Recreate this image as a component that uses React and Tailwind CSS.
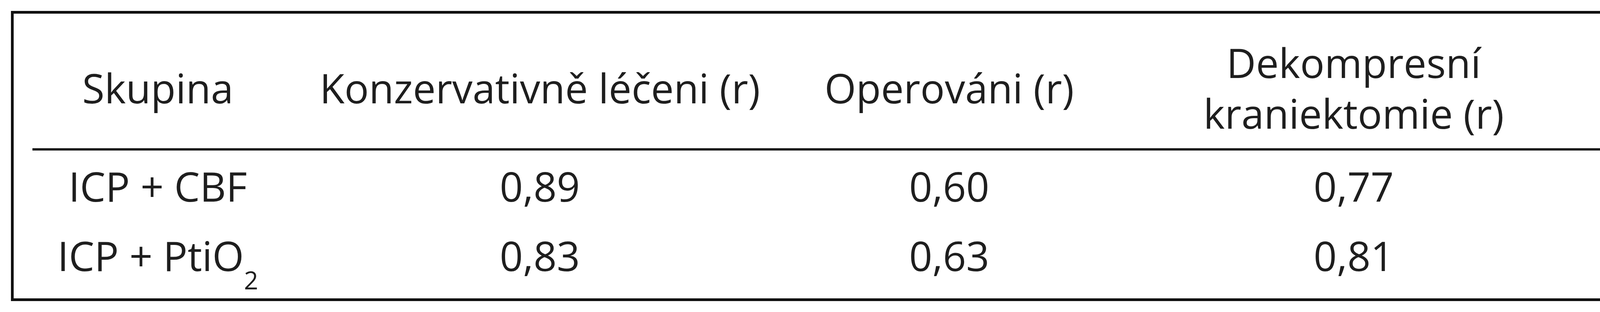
export default function App() {
  const font = { fontFamily: '"Open Sans", "Noto Sans", sans-serif' };
  const rows = [
    { g: <>ICP + CBF</>, a: "0,89", b: "0,60", c: "0,77" },
    {
      g: (
        <>
          ICP + PtiO<span className="text-[64px] leading-[0] align-[-47px]">2</span>
        </>
      ),
      a: "0,83",
      b: "0,63",
      c: "0,81",
    },
  ];
  return (
    <div className="w-[4193px] h-[800px] bg-white pt-[28px] pl-[28px]" style={font}>
      <div className="w-[4124px] h-[744px] border-[7px] border-[#111] pl-[48px] pr-[35px] text-[104px] leading-[130px] text-[#1e1e1e] font-[Open_Sans]">
        <div className="grid grid-cols-[642px_1314px_782px_1289px] items-center pt-[60px] pb-[25px] text-center whitespace-nowrap">
          <div>Skupina</div>
          <div>Konzervativně léčeni (r)</div>
          <div>Operováni (r)</div>
          <div>
            Dekompresní
            <br />
            kraniektomie (r)
          </div>
        </div>
        <div className="h-[6px] bg-[#1a1a1a]" />
        <div className="flex flex-col gap-[48px] pt-[26px]">
          {rows.map((r, i) => (
            <div key={i} className="grid grid-cols-[642px_1314px_782px_1289px] text-center whitespace-nowrap">
              <div>{r.g}</div>
              <div>{r.a}</div>
              <div>{r.b}</div>
              <div>{r.c}</div>
            </div>
          ))}
        </div>
      </div>
    </div>
  );
}
